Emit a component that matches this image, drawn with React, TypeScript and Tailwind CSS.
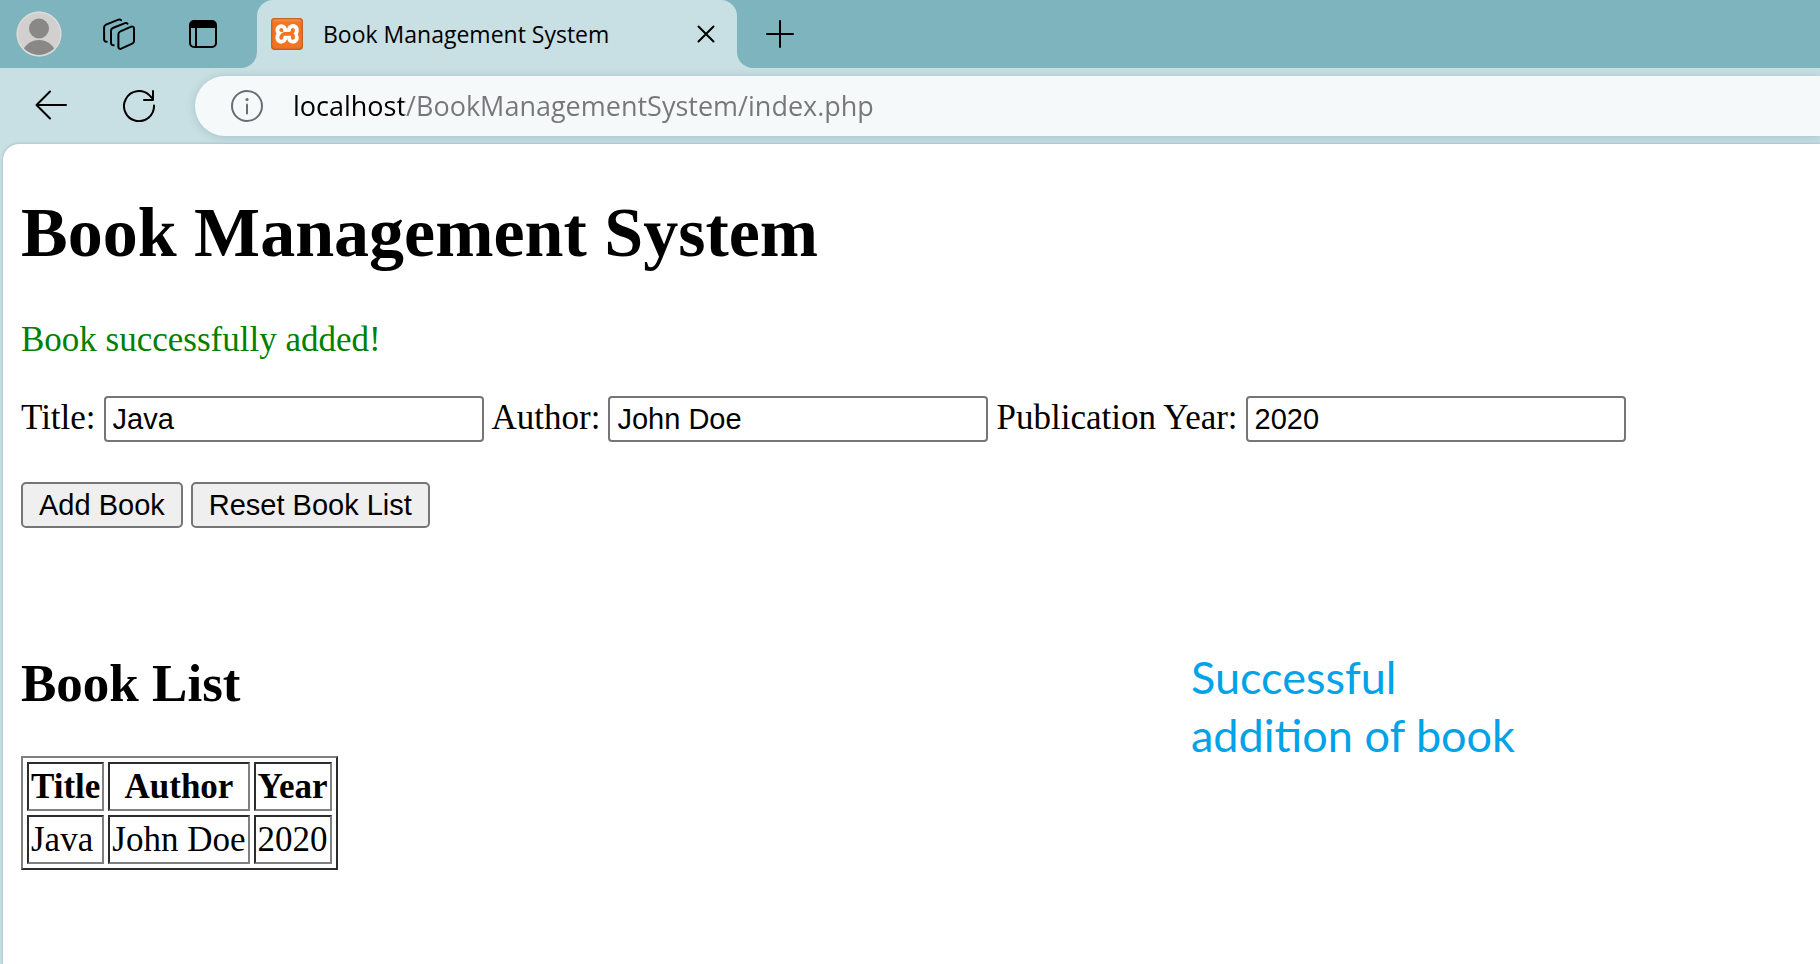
import { useState } from "react";
import { SiXampp } from "react-icons/si";

type Book = { title: string; author: string; year: string };

const ICON = {
  fill: "none",
  stroke: "currentColor",
  strokeWidth: 2,
  strokeLinecap: "round" as const,
  strokeLinejoin: "round" as const,
  "aria-hidden": true,
};

function Avatar() {
  return (
    <svg className="size-[46px]" viewBox="0 0 46 46" aria-hidden>
      <defs>
        <clipPath id="avatar-clip">
          <circle cx="23" cy="23" r="21.5" />
        </clipPath>
      </defs>
      <circle cx="23" cy="23" r="22.5" fill="#d2d0ce" />
      <g fill="#8a8886" clipPath="url(#avatar-clip)">
        <circle cx="23" cy="17.5" r="10" />
        <ellipse cx="23" cy="46" rx="17.5" ry="17" />
      </g>
      <circle cx="23" cy="23" r="21.7" fill="none" stroke="#dddbd9" strokeWidth="1.4" />
    </svg>
  );
}

function WorkspacesIcon() {
  return (
    <svg className="size-8" viewBox="0 0 32 32" {...ICON}>
      <path d="M17.4 13.4 28.2 8.6a2 2 0 0 1 2.8 1.8v12.6a3 3 0 0 1-1.8 2.7l-11 5a2 2 0 0 1-2.8-1.8V16.2a3 3 0 0 1 2-2.8Z" />
      <path d="M24.5 5.7a2.2 2.2 0 0 0-2.5-.6L9.8 10a3 3 0 0 0-1.8 2.7V25a2.2 2.2 0 0 0 2.7 2.2" />
      <path d="M18 2.2a2.2 2.2 0 0 0-2.5-.6L3 6.6a3 3 0 0 0-1.9 2.7V21.5a2.2 2.2 0 0 0 2.7 2.2" />
    </svg>
  );
}

function TabActionsIcon() {
  return (
    <svg className="size-7" viewBox="0 0 28 28" {...ICON}>
      <rect x="1" y="1" width="26" height="26" rx="4" />
      <path d="M1 8V5a4 4 0 0 1 4-4h18a4 4 0 0 1 4 4v3Z" fill="currentColor" stroke="none" />
      <path d="M1 7h26M7 8v18.5" strokeLinecap="butt" />
    </svg>
  );
}

function Favicon() {
  return (
    <span className="relative rounded-sm bg-white">
      <SiXampp className="size-8 text-[#f37421]" aria-hidden />
      <span className="absolute inset-0 rounded-sm shadow-[inset_0_0_2px_1px_#b5551b,inset_0_3px_2px_rgba(255,190,140,0.45)]" />
    </span>
  );
}

function BrowserTabs() {
  return (
    <header className="flex h-[68px] bg-[#c8dfe3]">
      <div className="flex w-[257px] items-center rounded-br-2xl bg-[#7eb4be] pl-4">
        <button aria-label="Profile">
          <Avatar />
        </button>
        <button aria-label="Workspaces" className="ml-[41px]">
          <WorkspacesIcon />
        </button>
        <button aria-label="Tab actions" className="ml-[54px]">
          <TabActionsIcon />
        </button>
      </div>
      <div className="bg-[#7eb4be]">
        <div className="flex h-[68px] w-[480px] items-center rounded-t-2xl bg-[#c8dfe3] pr-[18px] pl-[14px]">
          <Favicon />
          <span className="ml-5 flex-1 whitespace-nowrap text-[23px] leading-8">
            Book Management System
          </span>
          <button aria-label="Close tab" className="p-1">
            <svg className="size-[18px]" viewBox="0 0 18 18" {...ICON}>
              <path d="m1.5 1.5 15 15m0-15-15 15" />
            </svg>
          </button>
        </div>
      </div>
      <div className="flex flex-1 items-center rounded-bl-2xl bg-[#7eb4be] pl-[29px]">
        <button aria-label="New tab">
          <svg className="size-7" viewBox="0 0 28 28" {...ICON}>
            <path d="M14 1v26M1 14h26" />
          </svg>
        </button>
      </div>
    </header>
  );
}

function AddressBar() {
  return (
    <nav className="flex h-[76px] items-center py-2 pl-[35px]">
      <button aria-label="Back">
        <svg className="size-8" viewBox="0 0 32 32" {...ICON}>
          <path d="M31 15H1.5M15 1.5 1.5 15l13.5 13.5" />
        </svg>
      </button>
      <button aria-label="Refresh" className="ml-14">
        <svg className="size-8" viewBox="0 0 32 32" {...ICON}>
          <path d="M31 15.5A15 15 0 1 1 26.5 5.4L30 9M30 1v9h-9" />
        </svg>
      </button>
      <div className="ml-10 flex h-[60px] flex-1 items-center rounded-l-full bg-[#f5f9fa] pl-9 shadow-[0_1px_8px_rgba(60,110,120,0.25)]">
        <svg className="size-8 text-[#6b6e70]" viewBox="0 0 32 32" {...ICON}>
          <circle cx="16" cy="16" r="15" />
          <path d="M16 14.5v9" />
          <circle cx="16" cy="9.5" r="1.6" fill="currentColor" stroke="none" />
        </svg>
        <input
          aria-label="Address"
          defaultValue="localhost/BookManagementSystem/index.php"
          className="ml-[30px] h-10 flex-1 bg-[linear-gradient(to_right,#000_111px,#757778_111px)] bg-clip-text text-[27px] text-transparent outline-none"
        />
      </div>
    </nav>
  );
}

const FIELD =
  "h-[46px] w-[380px] rounded-[4px] border-2 border-[#767676] bg-white px-[7px] font-['Liberation_Sans',Arial,sans-serif] text-[29px] outline-none";
const BUTTON =
  "h-[46px] rounded-[5px] border-2 border-[#767676] bg-[#efefef] px-4 font-['Liberation_Sans',Arial,sans-serif] text-[29px] leading-10";
const CELL =
  "border-2 border-t-[#2c2c2c] border-r-[#808080] border-b-[#808080] border-l-[#2c2c2c] p-[2px]";

function BookTable({ books }: { books: Book[] }) {
  return (
    <table className="mt-[43px] border-separate border-spacing-1 border-2 border-t-[#808080] border-r-[#2c2c2c] border-b-[#2c2c2c] border-l-[#808080] leading-[41px]">
      <thead>
        <tr>
          <th className={CELL}>Title</th>
          <th className={CELL}>Author</th>
          <th className={CELL}>Year</th>
        </tr>
      </thead>
      <tbody>
        {books.map((book, index) => (
          <tr key={index}>
            <td className={CELL}>{book.title}</td>
            <td className={CELL}>{book.author}</td>
            <td className={CELL}>{book.year}</td>
          </tr>
        ))}
      </tbody>
    </table>
  );
}

export default function App() {
  const [form, setForm] = useState<Book>({ title: "Java", author: "John Doe", year: "2020" });
  const [books, setBooks] = useState<Book[]>([{ title: "Java", author: "John Doe", year: "2020" }]);

  return (
    <div className="flex min-h-screen flex-col bg-[#c8dfe3] font-['Open_Sans','Noto_Sans',sans-serif] text-black">
      <BrowserTabs />
      <AddressBar />
      <main className="ml-[3px] flex-1 rounded-tl-2xl bg-white pt-[49px] pb-8 pl-[18px] font-['Liberation_Serif','Times_New_Roman',serif] text-[35px] leading-10 shadow-[0_0_3px_rgba(60,110,120,0.4)]">
        <h1 className="text-[70px] leading-[80px] font-bold">Book Management System</h1>
        <p className="mt-[47px] text-[#008000]">Book successfully added!</p>
        <form
          onSubmit={(event) => {
            event.preventDefault();
            setBooks([...books, form]);
          }}
        >
          <div className="mt-9 flex flex-wrap items-baseline gap-x-2">
            <label htmlFor="title">Title:</label>
            <input
              id="title"
              className={FIELD}
              value={form.title}
              onChange={(event) => setForm({ ...form, title: event.target.value })}
            />
            <label htmlFor="author">Author:</label>
            <input
              id="author"
              className={FIELD}
              value={form.author}
              onChange={(event) => setForm({ ...form, author: event.target.value })}
            />
            <label htmlFor="year">Publication Year:</label>
            <input
              id="year"
              className={FIELD}
              value={form.year}
              onChange={(event) => setForm({ ...form, year: event.target.value })}
            />
          </div>
          <div className="mt-10 flex gap-2">
            <button type="submit" className={BUTTON}>
              Add Book
            </button>
            <button type="button" className={BUTTON} onClick={() => setBooks([])}>
              Reset Book List
            </button>
          </div>
        </form>
        <div className="mt-[120px] flex items-start justify-between pr-[305px]">
          <section className="pt-[5px]">
            <h2 className="text-[53px] leading-[60px] font-bold">Book List</h2>
            <BookTable books={books} />
          </section>
          <p className="font-[Lato,sans-serif] text-[45px] leading-[58px] whitespace-nowrap text-[#00a2e8]">
            Successful
            <br />
            addition of book
          </p>
        </div>
      </main>
    </div>
  );
}
